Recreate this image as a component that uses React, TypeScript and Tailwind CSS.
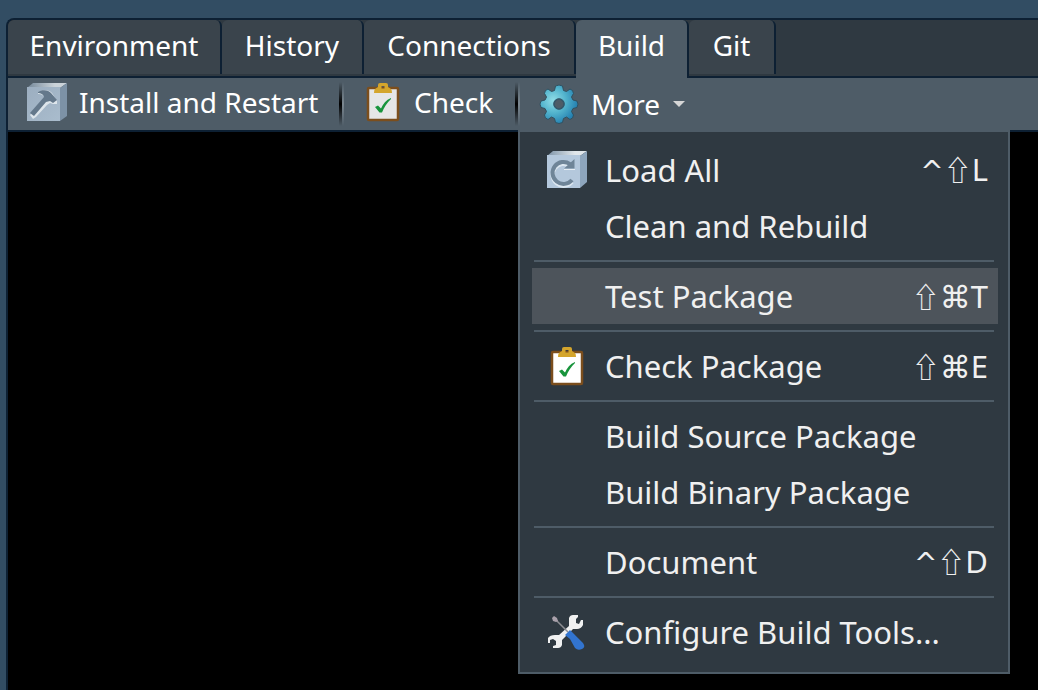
import type { ReactNode } from "react";

const tabs = [
  { name: "Environment", width: "w-[214px]" },
  { name: "History", width: "w-[142px]" },
  { name: "Connections", width: "w-[212px]" },
  { name: "Build", width: "w-[113px]" },
  { name: "Git", width: "w-[87px]" },
];

function HammerIcon() {
  return (
    <svg width="42" height="40" viewBox="0 0 42 40" aria-hidden="true">
      <defs>
        <linearGradient id="hf" x1="0" y1="0" x2="1" y2="1">
          <stop offset="0" stopColor="#9caec0" />
          <stop offset="1" stopColor="#a9bccd" />
        </linearGradient>
        <linearGradient id="ht" x1="0" y1="0" x2="1" y2="0">
          <stop offset="0.1" stopColor="#8193a3" />
          <stop offset="0.7" stopColor="#cbd3d9" />
        </linearGradient>
      </defs>
      <path d="M1 6 L7 1 H41 L34 6Z" fill="url(#ht)" />
      <path d="M34 6 L41 1 V34 L34 39Z" fill="#7d92a6" />
      <path d="M1 5 H34 V39 H1Z" fill="url(#hf)" />
      <path d="M12 10 C18 7 24 8 26 11 L31 19 L31 22 L27 22 L24 21 L21 23 L10 35 L7 37 L4 33 L19 17 C18 13 15 12 12 12Z" fill="#dde5eb" />
      <path d="M12 10 C16 7 23 8 25 11 L31 18 L27 21 L24 19 L20 20 L8 34 L4 31 L18 15 C17 12 15 11 12 11Z" fill="#64788b" />
    </svg>
  );
}

function ReloadIcon() {
  return (
    <svg width="42" height="40" viewBox="0 0 42 40" aria-hidden="true">
      <defs>
        <linearGradient id="rt" x1="0" y1="0" x2="1" y2="0">
          <stop offset="0.1" stopColor="#8b9fb1" />
          <stop offset="0.7" stopColor="#e0e6ea" />
        </linearGradient>
      </defs>
      <path d="M1 6 L7 1 H41 L34 6Z" fill="url(#rt)" />
      <path d="M34 6 L41 1 V32 L34 38Z" fill="#8ea6bd" />
      <path d="M1 5 H34 V38 H1Z" fill="#b4c8dc" />
      <path d="M26 30 A11 11 0 1 1 24 14" fill="none" stroke="#dce7f0" strokeWidth="4" transform="translate(0 2)" />
      <path d="M26 30 A11 11 0 1 1 24 14" fill="none" stroke="#6f8598" strokeWidth="4" />
      <path d="M18 18.500 L28.500 9 V18.500Z" fill="#6f8598" />
      <path d="M18 19.500 H29" stroke="#e7eef4" />
    </svg>
  );
}

function ClipboardIcon({ paper = "#ffffff" }: { paper?: string }) {
  return (
    <svg width="34" height="40" viewBox="0 0 34 40" aria-hidden="true">
      <rect x="2" y="6" width="30" height="32" rx="1" fill={paper} stroke="#7b4e1d" strokeWidth="2.500" />
      <path fillRule="evenodd" d="M12 5 V3 Q12 1 14 1 H20 Q22 1 22 3 V5 L25 7 Q26 8 26 11 H8 Q8 8 9 7Z M15.500 4 V6.500 H18.500 V4Z" fill="#d4a52c" />
      <path d="M9 25 L12 23.500 L15 26.500 C17 22 20 18 25 16 V17 C21 21 18 25 16 30.500 H13.500Z" fill="#18943c" />
    </svg>
  );
}

function GearIcon() {
  return (
    <svg width="40" height="42" viewBox="0 0 40 42" aria-hidden="true">
      <defs>
        <radialGradient id="gear" cx=".35" cy=".4" r=".65">
          <stop offset="0" stopColor="#91dde7" />
          <stop offset=".5" stopColor="#53b4cd" />
          <stop offset="1" stopColor="#237fb0" />
        </radialGradient>
      </defs>
      <path
        fill="url(#gear)"
        fillRule="evenodd"
        stroke="#31505f"
        strokeWidth="1"
        strokeLinejoin="round"
        d="M16.500 3 Q20 1 23.500 3 L24.500 7.500 L27.500 8.500 L31 6 Q34.500 7 34.500 10.500 L32.500 14 L34 17 L38 18 Q40 21 38 24.500 L34 25.500 L32.500 28.500 L34.500 32 Q34.500 35.500 31 36.500 L27.500 34 L24.500 35.500 L23.500 39.500 Q20 41.500 16.500 39.500 L15.500 35.500 L12.500 34 L9 36.500 Q5.500 35.500 5.500 32 L7.500 28.500 L6 25.500 L2 24.500 Q0 21 2 18 L6 17 L7.500 14 L5.500 10.500 Q5.500 7 9 6 L12.500 8.500 L15.500 7.500Z M20 16 A5 5 0 1 0 20 26 A5 5 0 1 0 20 16Z"
      />
      <circle cx="20" cy="21" r="5" fill="none" stroke="#35586b" strokeWidth="1.500" />
    </svg>
  );
}

function ToolsIcon() {
  return (
    <svg width="42" height="40" viewBox="0 0 42 40" aria-hidden="true">
      <path
        d="M23 6 Q24 3 27 3 H32 V5 L30 7 V11 L33 12 L35 8 H37 V13 Q35 17 31 17 H27 L16 28 V33 Q15 36 12 36 H7 V34 L10 33 V29 L7 27 L4 28 V31 H2 V26 Q4 23 9 23 H13 L23 14Z"
        fill="#f0f1f1"
      />
      <path d="M10 8 L22 20" stroke="#8e8f94" strokeWidth="1.500" />
      <path d="M6 6 L8 4 L11 6 L12 9 L10 10 L7 9Z" fill="#aaa1ab" />
      <path d="M19 23 L24 18 L28 22 L37 31 Q40 35 36 37 Q32 39 29 36 L24 27Z" fill="#3274cf" />
    </svg>
  );
}

type Item = { label: string; keys?: string; icon?: ReactNode; active?: boolean };

const groups: Item[][] = [
  [{ label: "Load All", keys: "^⇧L", icon: <ReloadIcon /> }, { label: "Clean and Rebuild" }],
  [{ label: "Test Package", keys: "⇧⌘T", active: true }],
  [{ label: "Check Package", keys: "⇧⌘E", icon: <ClipboardIcon /> }],
  [{ label: "Build Source Package" }, { label: "Build Binary Package" }],
  [{ label: "Document", keys: "^⇧D" }],
  [{ label: "Configure Build Tools...", icon: <ToolsIcon /> }],
];

const keyFonts: Record<string, string> = {
  "⇧": "font-['Noto_Sans_CJK_JP',sans-serif] text-[28px]",
  "⌘": "font-['DejaVu_Sans',sans-serif] text-[31px]",
  "^": "font-['DejaVu_Sans',sans-serif] text-[28px]",
};

function Shortcut({ keys }: { keys: string }) {
  return (
    <span className="flex items-baseline">
      {[...keys].map((key) => (
        <span key={key} className={keyFonts[key] ?? "text-[31px]"}>{key}</span>
      ))}
    </span>
  );
}

function Menu() {
  return (
    <div role="menu" className="absolute top-full -left-[2px] w-[492px] border-2 border-[#4e5c67] bg-[#2f3941] pt-[10px] pr-[10px] pb-3 pl-3 text-[31px] text-[#f0f0f0]">
      {groups.map((items, i) => (
        <div key={items[0].label}>
          {i > 0 && <hr className="mt-[6px] mr-1 mb-[6px] ml-[2px] border-t-2 border-[#4e5c67]" />}
          {items.map((item) => (
            <button
              key={item.label}
              role="menuitem"
              className={`flex h-14 w-full items-center pr-[10px] text-left ${item.active ? "bg-[#4d545b]" : ""}`}
            >
              <span className="flex w-[70px] shrink-0 justify-center">{item.icon}</span>
              <span className="flex-1 pl-[3px] whitespace-nowrap">{item.label}</span>
              {item.keys && <Shortcut keys={item.keys} />}
            </button>
          ))}
        </div>
      ))}
    </div>
  );
}

function Separator() {
  return (
    <span className="flex h-11 w-[5px] shrink-0" aria-hidden="true">
      <span className="w-[3px] bg-linear-to-b from-transparent via-black to-transparent" />
      <span className="w-[2px] bg-linear-to-b from-transparent via-[#7b8790] to-transparent" />
    </span>
  );
}

export default function App() {
  return (
    <div className="flex min-h-screen flex-col overflow-hidden bg-[#324d63] pt-[18px] pl-[6px] font-['Noto_Sans',sans-serif] text-[28px] leading-8 text-white">
      <main className="flex flex-1 flex-col rounded-tl-lg border-t-2 border-l-2 border-[#0d2033] bg-black">
        <div role="tablist" className="flex h-14 rounded-tl-md bg-[#2f3941]">
          {tabs.map(({ name, width }) =>
            name === "Build" ? (
              <button key={name} role="tab" aria-selected="true" className={`relative -mb-[2px] rounded-t-md border-r-2 border-[#0d2033] bg-[#4e5c67] pb-2 ${width}`}>
                {name}
              </button>
            ) : (
              <button key={name} role="tab" aria-selected="false" className={`mb-[2px] rounded-t-md border-r-2 border-[#0d2033] bg-[#3a444c] pb-1 ${width}`}>
                {name}
              </button>
            ),
          )}
        </div>
        <div role="toolbar" className="flex h-14 items-center border-y-2 border-[#0d2033] bg-[#4e5c67]">
          <button className="flex h-full w-[331px] items-center gap-[11px] pb-1 pl-[18px] whitespace-nowrap">
            <HammerIcon />
            Install and Restart
          </button>
          <Separator />
          <button className="flex h-full w-[171px] items-center gap-[14px] pb-1 pl-[22px]">
            <ClipboardIcon paper="#e6e6e6" />
            Check
          </button>
          <Separator />
          <div className="relative flex h-full items-center">
            <button aria-haspopup="menu" aria-expanded="true" className="flex items-center gap-3 pl-[19px]">
              <GearIcon />
              More
              <svg width="14" height="8" viewBox="0 0 14 8" aria-hidden="true">
                <path d="M1 1 H13 L7 7Z" fill="#d6d6d6" />
              </svg>
            </button>
            <Menu />
          </div>
        </div>
      </main>
    </div>
  );
}
